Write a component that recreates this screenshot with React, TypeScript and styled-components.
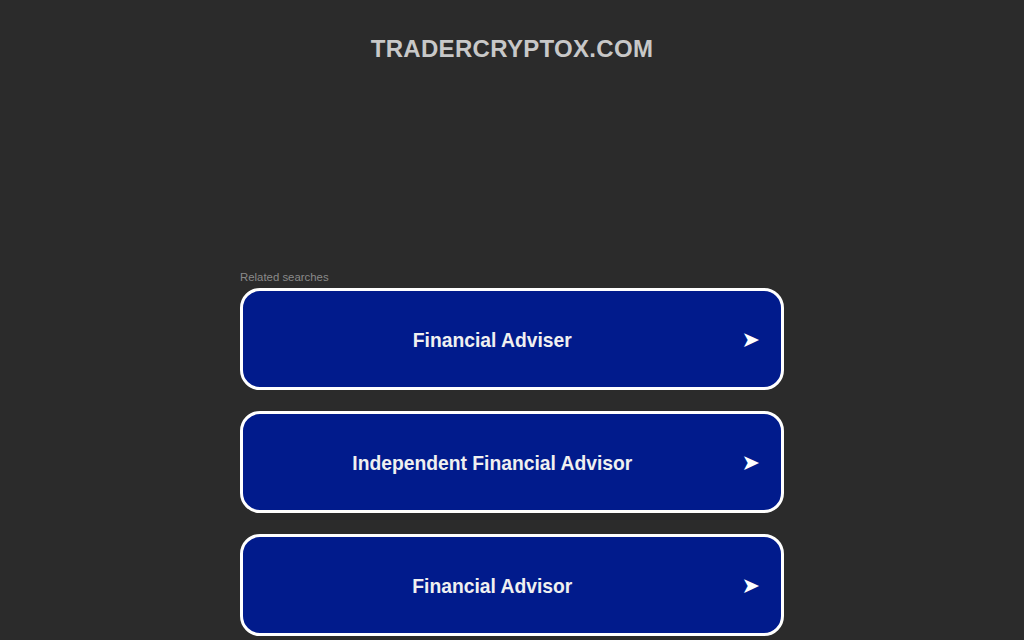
import styled, { createGlobalStyle } from "styled-components";

const GlobalStyle = createGlobalStyle`
  html, body {
    margin: 0;
    padding: 0;
    background: #2b2b2b;
    font-family: "Liberation Sans", Arial, sans-serif;
  }
`;

const Page = styled.div`
  display: flex;
  flex-direction: column;
  align-items: center;
  min-height: 640px;
`;

const Domain = styled.h1`
  margin: 0;
  padding-top: 35px;
  font-size: 24px;
  font-weight: 700;
  line-height: 28px;
  color: #c8c8c8;
  letter-spacing: 0.3px;
`;

const AdSpace = styled.div`
  height: 208px;
`;

const Searches = styled.div`
  width: 544px;
  display: flex;
  flex-direction: column;
`;

const Label = styled.div`
  font-size: 11.4px;
  line-height: 13px;
  color: #8a8a8a;
  margin-bottom: 4px;
`;

const List = styled.div`
  display: flex;
  flex-direction: column;
  gap: 21px;
`;

const Item = styled.a`
  box-sizing: border-box;
  height: 102px;
  display: flex;
  align-items: center;
  background: #011b8c;
  border: 3px solid #ffffff;
  border-radius: 20px;
  color: #f0f0f0;
  text-decoration: none;
  cursor: pointer;
`;

const ItemText = styled.span`
  flex: 1;
  padding-top: 3px;
  text-align: center;
  font-size: 19.3px;
  font-weight: 700;
`;

const Arrow = styled.span`
  padding-right: 21px;
  font-family: "DejaVu Sans", sans-serif;
  font-size: 22px;
  color: #ffffff;
`;

const items = ["Financial Adviser", "Independent Financial Advisor", "Financial Advisor"];

export default function App() {
  return (
    <>
      <GlobalStyle />
      <Page>
        <Domain>TRADERCRYPTOX.COM</Domain>
        <AdSpace />
        <Searches>
          <Label>Related searches</Label>
          <List>
            {items.map((t) => (
              <Item key={t}>
                <ItemText>{t}</ItemText>
                <Arrow>➤</Arrow>
              </Item>
            ))}
          </List>
        </Searches>
      </Page>
    </>
  );
}
